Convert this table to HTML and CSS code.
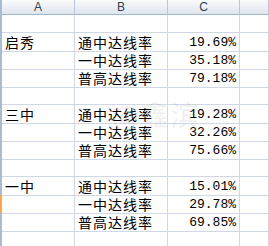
FILE: index.html
```html
<!DOCTYPE html>
<html lang="zh">
<head>
<meta charset="utf-8">
<link rel="stylesheet" href="styles.css">
</head>
<body>
<div class="sheet">
  <div class="row head">
    <div class="cell hc">A</div>
    <div class="cell hc">B</div>
    <div class="cell hc">C</div>
    <div class="cell hc"></div>
  </div>
  <div class="row"><div class="cell"></div><div class="cell"></div><div class="cell"></div><div class="cell"></div></div>
  <div class="row"><div class="cell">启秀</div><div class="cell">通中达线率</div><div class="cell num">19.69%</div><div class="cell"></div></div>
  <div class="row"><div class="cell"></div><div class="cell">一中达线率</div><div class="cell num">35.18%</div><div class="cell"></div></div>
  <div class="row"><div class="cell"></div><div class="cell">普高达线率</div><div class="cell num">79.18%</div><div class="cell"></div></div>
  <div class="row"><div class="cell"></div><div class="cell"></div><div class="cell"></div><div class="cell"></div></div>
  <div class="row"><div class="cell">三中</div><div class="cell">通中达线率</div><div class="cell num">19.28%</div><div class="cell"></div></div>
  <div class="row"><div class="cell"></div><div class="cell">一中达线率</div><div class="cell num">32.26%</div><div class="cell"></div></div>
  <div class="row"><div class="cell"></div><div class="cell">普高达线率</div><div class="cell num">75.66%</div><div class="cell"></div></div>
  <div class="row"><div class="cell"></div><div class="cell"></div><div class="cell"></div><div class="cell"></div></div>
  <div class="row"><div class="cell">一中</div><div class="cell">通中达线率</div><div class="cell num">15.01%</div><div class="cell"></div></div>
  <div class="row sel"><div class="cell"></div><div class="cell">一中达线率</div><div class="cell num">29.78%</div><div class="cell"></div></div>
  <div class="row"><div class="cell"></div><div class="cell">普高达线率</div><div class="cell num">69.85%</div><div class="cell"></div></div>
  <div class="row"><div class="cell"></div><div class="cell"></div><div class="cell"></div><div class="cell"></div></div>
  <div class="watermark">@鑫滨</div>
</div>
</body>
</html>
```
FILE: styles.css
```css
html, body {
  margin: 0;
  padding: 0;
  background: #ffffff;
}
.sheet {
  position: relative;
  width: 269px;
  height: 246px;
  overflow: hidden;
  font-family: "Noto Sans CJK SC", "Liberation Sans", sans-serif;
  font-size: 14px;
  color: #000;
}
.row {
  display: grid;
  grid-template-columns: 73px 93px 72px 1fr;
  height: 18px;
  box-sizing: border-box;
  border-left: 2px solid #a9bcd2;
}
.row.sel {
  border-left-color: #f6a84a;
}
.cell {
  box-sizing: border-box;
  border-right: 1px solid #d0d7e5;
  border-bottom: 1px solid #d0d7e5;
  padding: 1px 2px 0 3px;
  line-height: 17px;
  white-space: nowrap;
  letter-spacing: 1px;
}
.num {
  text-align: right;
  font-family: "Liberation Mono", monospace;
  font-size: 13px;
  letter-spacing: 0;
  padding-right: 3px;
}
.head {
  height: 15px;
}
.hc {
  background: linear-gradient(#f9fafc, #dfe5ec);
  border-right: 1px solid #b9c9da;
  border-bottom: 1px solid #9eb6ce;
  padding: 0;
  text-align: center;
  font-family: "Liberation Sans", sans-serif;
  font-size: 12px;
  line-height: 14px;
  color: #30424a;
  letter-spacing: 0;
}
.watermark {
  position: absolute;
  left: 112px;
  top: 98px;
  font-size: 28px;
  line-height: 32px;
  color: rgba(90, 90, 90, 0.1);
  letter-spacing: 2px;
  pointer-events: none;
}
```
